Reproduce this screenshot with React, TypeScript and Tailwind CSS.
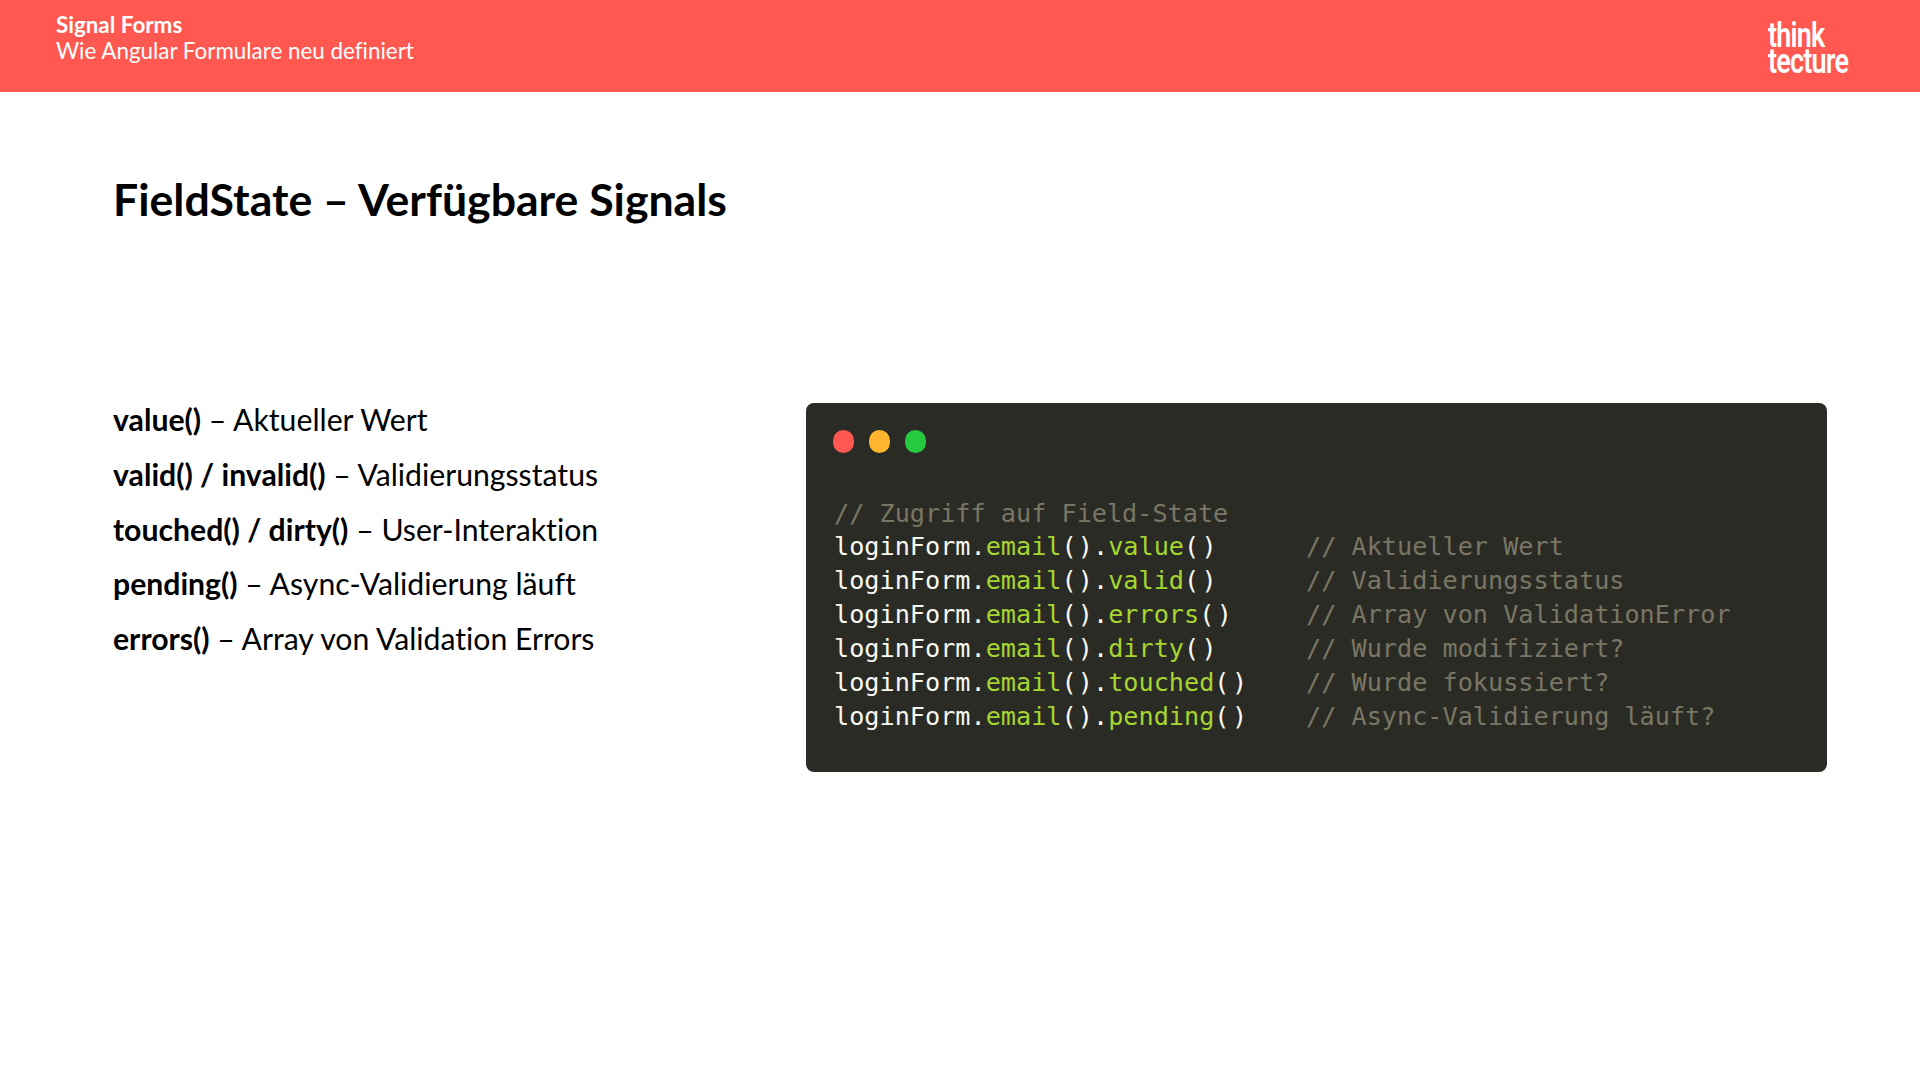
const bullets = [
  { name: 'value()', text: 'Aktueller Wert' },
  { name: 'valid() / invalid()', text: 'Validierungsstatus' },
  { name: 'touched() / dirty()', text: 'User-Interaktion' },
  { name: 'pending()', text: 'Async-Validierung läuft' },
  { name: 'errors()', text: 'Array von Validation Errors' },
];

const codeLines = [
  { prop: 'value', comment: 'Aktueller Wert' },
  { prop: 'valid', comment: 'Validierungsstatus' },
  { prop: 'errors', comment: 'Array von ValidationError' },
  { prop: 'dirty', comment: 'Wurde modifiziert?' },
  { prop: 'touched', comment: 'Wurde fokussiert?' },
  { prop: 'pending', comment: 'Async-Validierung läuft?' },
];

export default function App() {
  return (
    <div className="w-[1920px] h-[1080px] bg-white overflow-hidden font-['Lato','Liberation_Sans',sans-serif] text-black [font-variant-ligatures:none]">
      <header className="h-[92px] bg-[#ff5850] flex items-start justify-between pl-[56px] pr-[73px]">
        <div className="pt-[12px] text-white text-[22.4px] leading-[26px]">
          <div className="font-bold">Signal Forms</div>
          <div>Wie Angular Formulare neu definiert</div>
        </div>
        <div className="pt-[23px] text-white font-['Roboto',sans-serif] font-semibold text-[35px] leading-[26px] tracking-[-1px] scale-x-[0.77] origin-left w-[79px]">
          <div>think</div>
          <div>tecture</div>
        </div>
      </header>

      <main className="pl-[113px] pr-[93px]">
        <h1 className="pt-[79px] text-[44.6px] leading-[56px] font-bold">FieldState – Verfügbare Signals</h1>

        <div className="flex justify-between pt-[176px]">
          <ul className="flex flex-col gap-[19.3px] -mt-[1px] text-[30.2px] leading-[35.5px]">
            {bullets.map((b) => (
              <li key={b.name}>
                <span className="font-bold">{b.name}</span> – {b.text}
              </li>
            ))}
          </ul>

          <div className="w-[1021px] h-[369px] bg-[#2b2b26] rounded-[8px] pl-[28px] pt-[27px] font-['DejaVu_Sans_Mono',monospace] text-[25.2px] leading-[34px]">
            <div className="flex gap-[15px] -ml-[1px]">
              <span className="w-[21px] h-[23px] rounded-full bg-[#ff5850]" />
              <span className="w-[21px] h-[23px] rounded-full bg-[#ffb52e]" />
              <span className="w-[21px] h-[23px] rounded-full bg-[#27c93f]" />
            </div>
            <div className="pt-[44px] -mb-[1px] text-[#7a7664]">// Zugriff auf Field-State</div>
            {codeLines.map((l) => (
              <div key={l.prop} className="flex text-[#f8f8f2]">
                <div className="w-[472px]">
                  loginForm.<span className="text-[#a6d52f]">email</span>
                  <span className="tracking-[1.2px]">(</span>).
                  <span className="text-[#a6d52f]">{l.prop}</span>
                  <span className="tracking-[2.4px]">(</span>)
                </div>
                <div className="text-[#7a7664]">// {l.comment}</div>
              </div>
            ))}
          </div>
        </div>
      </main>
    </div>
  );
}
